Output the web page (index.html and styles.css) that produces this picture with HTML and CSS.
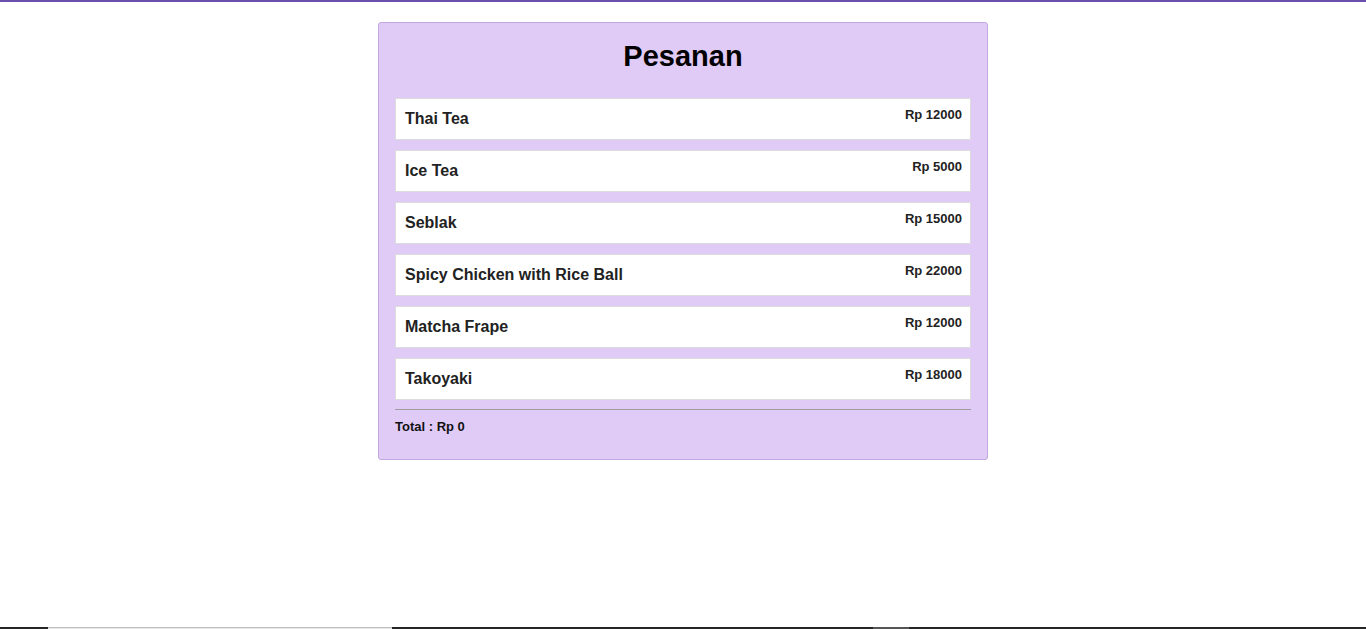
FILE: index.html
```html
<!DOCTYPE html>
<html lang="id">
<head>
<meta charset="utf-8">
<title>Pesanan</title>
<link rel="stylesheet" href="styles.css">
</head>
<body>
<div class="topbar"></div>
<main class="card">
  <h1 class="title">Pesanan</h1>
  <ul class="list">
    <li class="item"><span class="name">Thai Tea</span><span class="price">Rp 12000</span></li>
    <li class="item"><span class="name">Ice Tea</span><span class="price">Rp 5000</span></li>
    <li class="item"><span class="name">Seblak</span><span class="price">Rp 15000</span></li>
    <li class="item"><span class="name">Spicy Chicken with Rice Ball</span><span class="price">Rp 22000</span></li>
    <li class="item"><span class="name">Matcha Frape</span><span class="price">Rp 12000</span></li>
    <li class="item"><span class="name">Takoyaki</span><span class="price">Rp 18000</span></li>
  </ul>
  <hr class="divider">
  <p class="total">Total : Rp 0</p>
</main>
<div class="strip">
  <span class="seg dark s1"></span>
  <span class="seg light s2"></span>
  <span class="seg dark s3"></span>
  <span class="seg mid s4"></span>
  <span class="seg dark s5"></span>
</div>
</body>
</html>
```

FILE: styles.css
```css
html, body {
  margin: 0;
  padding: 0;
  background: #ffffff;
  font-family: "Liberation Sans", Arial, sans-serif;
}

.topbar {
  height: 2px;
  background: #6b4fae;
}

.card {
  width: 576px;
  margin: 20px auto 0;
  padding: 16px 16px 25px;
  background: #e0cbf7;
  border: 1px solid #c2a8dd;
  border-radius: 3px;
}

.title {
  margin: 0;
  font-size: 29px;
  line-height: 34px;
  font-weight: bold;
  color: #000;
  text-align: center;
}

.list {
  list-style: none;
  margin: 25px 0 0;
  padding: 0;
  display: flex;
  flex-direction: column;
  gap: 10px;
}

.item {
  display: flex;
  justify-content: space-between;
  align-items: flex-start;
  background: #ffffff;
  border: 1px solid #dcdcdc;
  padding: 0 8px 0 9px;
  height: 40px;
}

.name {
  font-size: 16px;
  line-height: 40px;
  font-weight: bold;
  color: #222;
}

.price {
  margin-top: 8px;
  font-size: 13px;
  line-height: 15px;
  font-weight: bold;
  color: #222;
}

.divider {
  margin: 9px 0 0;
  border: 0;
  border-top: 1px solid #9e9e9e;
  height: 0;
}

.total {
  margin: 9px 0 0;
  font-size: 13px;
  line-height: 15px;
  font-weight: bold;
  color: #111;
}

.strip {
  position: fixed;
  left: 0;
  right: 0;
  bottom: 0;
  height: 2px;
  display: flex;
}

.seg { height: 2px; }
.dark { background: #262626; }
.light { background: #e6e6e6; border-top: 1px solid #c0c0c0; height: 1px; }
.mid { background: #555; }
.s1 { width: 48px; }
.s2 { width: 344px; }
.s3 { width: 481px; }
.s4 { width: 36px; }
.s5 { flex: 1; }
```
